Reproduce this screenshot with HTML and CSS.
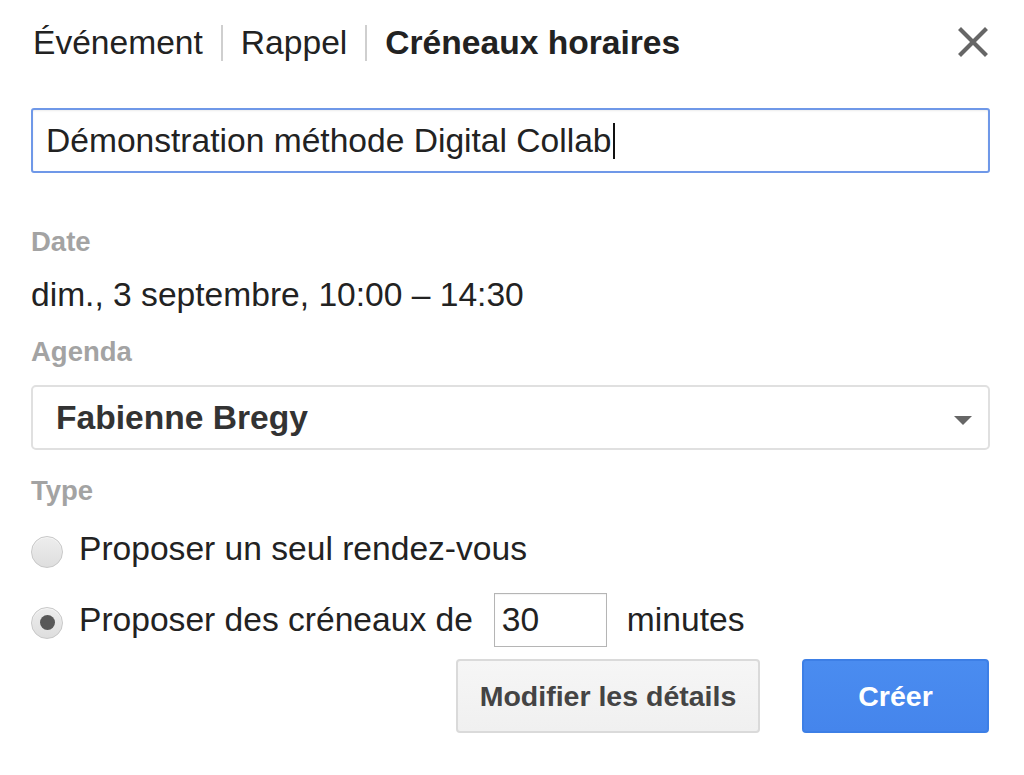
FILE: index.html
```html
<!DOCTYPE html>
<html lang="fr">
<head>
<meta charset="utf-8">
<title>Créneaux horaires</title>
<link rel="stylesheet" href="styles.css">
</head>
<body>
<div class="dialog">
  <div class="header">
    <span class="tab">Événement</span>
    <span class="sep"></span>
    <span class="tab">Rappel</span>
    <span class="sep"></span>
    <span class="tab tab-active">Créneaux horaires</span>
    <span class="close" aria-label="Fermer">
      <svg width="30" height="30" viewBox="0 0 30 30"><path d="M3 3 L27 27 M27 3 L3 27" stroke="#666" stroke-width="4.2" stroke-linecap="square" fill="none"/></svg>
    </span>
  </div>

  <div class="title-input"><span class="title-text">Démonstration méthode Digital Collab</span><span class="caret"></span></div>

  <div class="label label-date">Date</div>
  <div class="value">dim., 3 septembre, 10:00 – 14:30</div>

  <div class="label label-agenda">Agenda</div>
  <div class="select">
    <span class="select-text">Fabienne Bregy</span>
    <span class="arrow"></span>
  </div>

  <div class="label label-type">Type</div>
  <div class="radio-row row-one">
    <span class="radio"></span>
    <span class="radio-text">Proposer un seul rendez-vous</span>
  </div>
  <div class="radio-row row-two">
    <span class="radio radio-on"><span class="dot"></span></span>
    <span class="radio-text">Proposer des créneaux de</span>
    <span class="minutes-box">30</span>
    <span class="radio-text">minutes</span>
  </div>

  <div class="actions">
    <span class="btn btn-secondary">Modifier les détails</span>
    <span class="btn btn-primary">Créer</span>
  </div>
</div>
</body>
</html>
```

FILE: styles.css
```css
html, body {
  margin: 0;
  padding: 0;
  background: #fff;
}

body {
  font-family: "Liberation Sans", Arial, sans-serif;
  color: #222;
}

.dialog {
  width: 959px;
  padding: 23px 0 0 31px;
  font-size: 33.6px;
}

.header {
  display: flex;
  align-items: center;
  height: 40px;
  line-height: 40px;
  padding-left: 2px;
}

.tab {
  color: #222;
  white-space: nowrap;
}

.tab-active {
  font-weight: bold;
}

.sep {
  width: 2px;
  height: 36px;
  background: #cfcfcf;
  margin: 0 18px;
}

.close {
  margin-left: auto;
  margin-right: 2px;
  width: 30px;
  height: 30px;
  display: flex;
  margin-top: -2px;
}

.title-input {
  margin-top: 45px;
  height: 61px;
  border: 2px solid #6f98e8;
  border-radius: 3px;
  box-sizing: content-box;
  display: flex;
  align-items: center;
  padding-left: 13px;
  line-height: 40px;
  color: #222;
  box-shadow: inset 0 1px 2px rgba(0,0,0,0.08);
}

.caret {
  width: 2px;
  height: 36px;
  background: #111;
  margin-left: 1px;
}

.label {
  font-size: 27.5px;
  font-weight: bold;
  color: #a3a3a3;
  line-height: 32px;
}

.label-date { margin-top: 53px; }
.label-agenda { margin-top: 21px; }
.label-type { margin-top: 25px; }

.value {
  margin-top: 17px;
  line-height: 40px;
  color: #222;
}

.select {
  margin-top: 17px;
  height: 61px;
  border: 2px solid #e0e0e0;
  border-radius: 5px;
  display: flex;
  align-items: center;
  padding-left: 23px;
  padding-right: 16px;
}

.select-text {
  font-weight: bold;
  color: #333;
  line-height: 40px;
}

.arrow {
  margin-left: auto;
  width: 0;
  height: 0;
  border-left: 9px solid transparent;
  border-right: 9px solid transparent;
  border-top: 9px solid #666;
  margin-top: 6px;
}

.radio-row {
  display: flex;
  align-items: center;
  line-height: 48px;
}

.row-one {
  margin-top: 18px;
  height: 48px;
}

.row-two {
  margin-top: 20px;
  height: 54px;
}

.radio {
  width: 30px;
  height: 30px;
  border: 1px solid #c8c8c8;
  border-radius: 50%;
  background: linear-gradient(#ededed, #dedede);
  box-shadow: inset 0 1px 1px rgba(255,255,255,0.6);
  margin-top: 5px;
  display: flex;
  align-items: center;
  justify-content: center;
  flex: none;
}

.dot {
  width: 15px;
  height: 15px;
  border-radius: 50%;
  background: #585858;
}

.radio-text {
  margin-left: 16px;
  color: #222;
  white-space: nowrap;
}

.minutes-box {
  margin-left: 21px;
  margin-right: 4px;
  width: 104px;
  height: 52px;
  border: 1px solid #b5b5b5;
  padding-left: 7px;
  line-height: 52px;
  color: #222;
  box-shadow: inset 0 1px 1px rgba(0,0,0,0.05);
}

.actions {
  margin-top: 12px;
  display: flex;
  justify-content: flex-end;
  gap: 42px;
  padding-right: 1px;
}

.btn {
  height: 70px;
  display: flex;
  align-items: center;
  justify-content: center;
  font-size: 28.5px;
  font-weight: bold;
  border-radius: 4px;
  box-sizing: content-box;
}

.btn-secondary {
  width: 300px;
  border: 2px solid #dadada;
  background: linear-gradient(#f6f6f6, #f0f0f0);
  color: #444;
}

.btn-primary {
  width: 183px;
  border: 2px solid #3d7fe6;
  background: linear-gradient(#4a8cf0, #4585ec);
  color: #fff;
}
```
